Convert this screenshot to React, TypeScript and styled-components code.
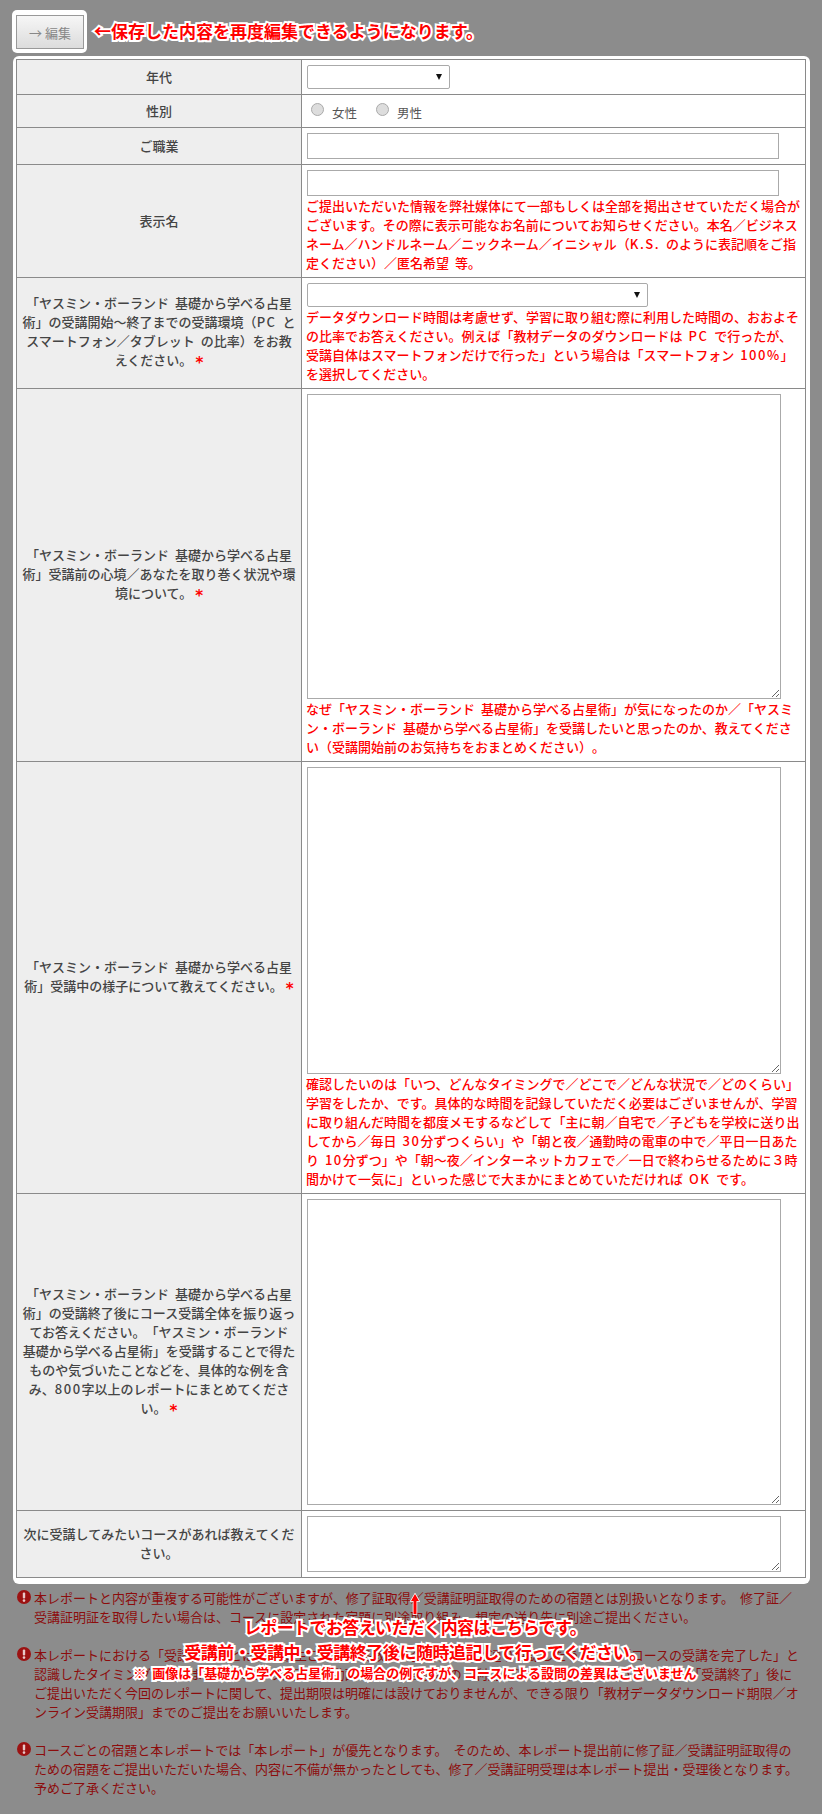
import styled, { createGlobalStyle } from "styled-components";

const GlobalStyle = createGlobalStyle`
  html, body {
    margin: 0;
    padding: 0;
    background: #8c8c8c;
  }
  body {
    font-family: "Noto Sans CJK JP", "Noto Sans", sans-serif;
    font-size: 13px;
    line-height: 19px;
    color: #333;
    word-spacing: 3px;
    text-spacing-trim: space-all;
  }
`;

const Page = styled.div`
  position: relative;
  width: 822px;
  height: 1814px;
  padding: 10px 12px 0 13px;
  box-sizing: border-box;
  overflow: hidden;
`;

const Header = styled.div`
  display: flex;
  align-items: center;
  margin-left: -1px;
  height: 43px;
  margin-bottom: 3px;
`;

const ButtonFrame = styled.div`
  background: #fff;
  border-radius: 5px;
  padding: 5px 3px 4px 4px;
  height: 34px;
`;

const EditButton = styled.button`
  width: 68px;
  height: 34px;
  box-sizing: border-box;
  border: 1px solid #999;
  background: linear-gradient(#f6f6f6, #dcdcdc);
  color: #888;
  font-family: inherit;
  font-size: 13px;
  padding: 0;
`;

const Callout = styled.span<{ $size: number; $spacing: number; $gap?: number }>`
  color: #f00;
  font-weight: 700;
  font-size: ${(p) => p.$size}px;
  letter-spacing: ${(p) => p.$spacing}px;
  line-height: 1.2;
  margin-top: ${(p) => p.$gap ?? 0}px;
  white-space: nowrap;
  -webkit-text-stroke: 4px #fff;
  paint-order: stroke fill;
`;

const TopCallout = styled(Callout)`
  margin-left: 7px;
`;

const Card = styled.div`
  background: #fff;
  border-radius: 6px;
  padding: 3px 4px 6px 3px;
`;

const FormTable = styled.table`
  width: 100%;
  border-collapse: collapse;
  table-layout: fixed;
`;

const LabelColumn = styled.col`
  width: 285px;
`;

const LabelCell = styled.th`
  box-sizing: border-box;
  padding: 4px 5px 6px;
  border: 1px solid #8a8a8a;
  background: #eee;
  color: #444;
  font-size: 13px;
  font-weight: 500;
  text-align: center;
  vertical-align: middle;
`;

const FieldCell = styled.td`
  padding: 5px;
  border: 1px solid #8a8a8a;
  vertical-align: top;
`;

const Required = styled.span`
  color: #f00;
  margin-left: 3px;
  font-family: "DejaVu Sans", sans-serif;
  font-weight: 700;
  font-size: 15px;
  vertical-align: -3px;
  line-height: 1;
`;

const Latin = styled.span`
  letter-spacing: 1.5px;
`;

const SelectBox = styled.div<{ $width: number }>`
  position: relative;
  width: ${(p) => p.$width}px;
  height: 24px;
  box-sizing: border-box;
  border: 1px solid #aaa;
  border-radius: 2px;
  background: #fff;

  &::after {
    content: "";
    position: absolute;
    right: 7px;
    top: 8px;
    border-left: 3px solid transparent;
    border-right: 3px solid transparent;
    border-top: 6px solid #111;
  }
`;

const TextInput = styled.input`
  display: block;
  width: 472px;
  height: 26px;
  box-sizing: border-box;
  border: 1px solid #aaa;
  padding: 0;
  margin: 0;
  background: #fff;
`;

const TextBlock = styled.textarea<{ $height: number }>`
  display: block;
  width: 474px;
  height: ${(p) => p.$height}px;
  box-sizing: border-box;
  border: 1px solid #aaa;
  padding: 0;
  margin: 0;
  background: #fff;
`;

const Hint = styled.div`
  color: #f00;
  font-size: 13px;
  font-weight: 500;
  margin-left: -1px;
`;

const RadioGroup = styled.div`
  display: flex;
  align-items: center;
  padding-left: 4px;
  height: 22px;
`;

const RadioDot = styled.input`
  appearance: none;
  width: 13px;
  height: 13px;
  margin: 0 8px 3px 0;
  box-sizing: border-box;
  border: 1px solid #aaa;
  border-radius: 50%;
  background: #ddd;
`;

const RadioText = styled.label`
  font-size: 12.5px;
  color: #555;
  margin: 2px 19px 0 0;
`;

const Notes = styled.div`
  padding: 4px 0 0 4px;
  color: #8c0c0c;
  font-size: 13px;
`;

const Note = styled.div`
  display: flex;
  gap: 3px;
  width: 785px;
  margin-bottom: 19px;
`;

const NoteIcon = styled.svg`
  flex: none;
  width: 14px;
  height: 14px;
  margin-top: 2px;
`;

const NoteText = styled.div`
  flex: 1;
`;

const OverlayNote = styled.div`
  position: absolute;
  left: 0;
  right: 0;
  top: 1593px;
  padding-left: 8px;
  display: flex;
  flex-direction: column;
  align-items: center;
`;

const UpArrow = styled.svg`
  width: 10px;
  height: 22px;
  margin-bottom: 2px;
`;

const WarnIcon = () => (
  <NoteIcon viewBox="0 0 14 14">
    <circle cx="7" cy="7" r="7" fill="#9c1212" />
    <rect x="5.8" y="2.5" width="2.4" height="6" rx="1" fill="#e8c8c8" />
    <circle cx="7" cy="10.6" r="1.3" fill="#e8c8c8" />
  </NoteIcon>
);

export default function App() {
  return (
    <Page>
      <GlobalStyle />
      <Header>
        <ButtonFrame>
          <EditButton type="button">→ 編集</EditButton>
        </ButtonFrame>
        <TopCallout $size={17} $spacing={0}>
          ←保存した内容を再度編集できるようになります。
        </TopCallout>
      </Header>

      <Card>
        <FormTable>
          <colgroup>
            <LabelColumn />
            <col />
          </colgroup>
          <tbody>
            <tr>
              <LabelCell>年代</LabelCell>
              <FieldCell>
                <SelectBox $width={143} />
              </FieldCell>
            </tr>
            <tr>
              <LabelCell>性別</LabelCell>
              <FieldCell>
                <RadioGroup>
                  <RadioDot type="radio" disabled />
                  <RadioText>女性</RadioText>
                  <RadioDot type="radio" disabled />
                  <RadioText>男性</RadioText>
                </RadioGroup>
              </FieldCell>
            </tr>
            <tr>
              <LabelCell>ご職業</LabelCell>
              <FieldCell>
                <TextInput />
              </FieldCell>
            </tr>
            <tr>
              <LabelCell>表示名</LabelCell>
              <FieldCell>
                <TextInput />
                <Hint>
                  ご提出いただいた情報を弊社媒体にて一部もしくは全部を掲出させていただく場合がございます。その際に表示可能なお名前についてお知らせください。本名／ビジネスネーム／ハンドルネーム／ニックネーム／イニシャル（<Latin>K.S.</Latin> のように表記順をご指定ください）／匿名希望 等。
                </Hint>
              </FieldCell>
            </tr>
            <tr>
              <LabelCell>
                「ヤスミン・ボーランド 基礎から学べる占星術」の受講開始～終了までの受講環境（<Latin>PC</Latin> とスマートフォン／タブレット の比率）をお教えください。
                <Required>*</Required>
              </LabelCell>
              <FieldCell>
                <SelectBox $width={341} />
                <Hint>
                  データダウンロード時間は考慮せず、学習に取り組む際に利用した時間の、おおよその比率でお答えください。例えば「教材データのダウンロードは <Latin>PC</Latin> で行ったが、受講自体はスマートフォンだけで行った」という場合は「スマートフォン <Latin>100%</Latin>」を選択してください。
                </Hint>
              </FieldCell>
            </tr>
            <tr>
              <LabelCell>
                「ヤスミン・ボーランド 基礎から学べる占星術」受講前の心境／あなたを取り巻く状況や環境について。
                <Required>*</Required>
              </LabelCell>
              <FieldCell>
                <TextBlock $height={305} />
                <Hint>
                  なぜ「ヤスミン・ボーランド 基礎から学べる占星術」が気になったのか／「ヤスミン・ボーランド 基礎から学べる占星術」を受講したいと思ったのか、教えてください（受講開始前のお気持ちをおまとめください）。
                </Hint>
              </FieldCell>
            </tr>
            <tr>
              <LabelCell>
                「ヤスミン・ボーランド 基礎から学べる占星術」受講中の様子について教えてください。
                <Required>*</Required>
              </LabelCell>
              <FieldCell>
                <TextBlock $height={307} />
                <Hint>
                  確認したいのは「いつ、どんなタイミングで／どこで／どんな状況で／どのくらい」学習をしたか、です。具体的な時間を記録していただく必要はございませんが、学習に取り組んだ時間を都度メモするなどして「主に朝／自宅で／子どもを学校に送り出してから／毎日 <Latin>30</Latin>分ずつくらい」や「朝と夜／通勤時の電車の中で／平日一日あたり <Latin>10</Latin>分ずつ」や「朝～夜／インターネットカフェで／一日で終わらせるために３時間かけて一気に」といった感じで大まかにまとめていただければ <Latin>OK</Latin> です。
                </Hint>
              </FieldCell>
            </tr>
            <tr>
              <LabelCell>
                「ヤスミン・ボーランド 基礎から学べる占星術」の受講終了後にコース受講全体を振り返ってお答えください。「ヤスミン・ボーランド 基礎から学べる占星術」を受講することで得たものや気づいたことなどを、具体的な例を含み、<Latin>800</Latin>字以上のレポートにまとめてください。
                <Required>*</Required>
              </LabelCell>
              <FieldCell>
                <TextBlock $height={306} />
              </FieldCell>
            </tr>
            <tr>
              <LabelCell>次に受講してみたいコースがあれば教えてください。</LabelCell>
              <FieldCell>
                <TextBlock $height={56} />
              </FieldCell>
            </tr>
          </tbody>
        </FormTable>
      </Card>

      <Notes>
        <Note>
          <WarnIcon />
          <NoteText>
            本レポートと内容が重複する可能性がございますが、修了証取得／受講証明証取得のための宿題とは別扱いとなります。 修了証／受講証明証を取得したい場合は、コースに設定された宿題に別途取り組み、規定の送り先に別途ご提出ください。
          </NoteText>
        </Note>
        <Note>
          <WarnIcon />
          <NoteText>
            本レポートにおける「受講終了」とは、受講生ご自身が各教材の全内容をひと通り確認したうえで、「コースの受講を完了した」と認識したタイミングを指します。このため、実際の動画の視聴や各教材のご利用状況などは、特に問いません。 「受講終了」後にご提出いただく今回のレポートに関して、提出期限は明確には設けておりませんが、できる限り「教材データダウンロード期限／オンライン受講期限」までのご提出をお願いいたします。
          </NoteText>
        </Note>
        <Note>
          <WarnIcon />
          <NoteText>
            コースごとの宿題と本レポートでは「本レポート」が優先となります。 そのため、本レポート提出前に修了証／受講証明証取得のための宿題をご提出いただいた場合、内容に不備が無かったとしても、修了／受講証明受理は本レポート提出・受理後となります。予めご了承ください。
          </NoteText>
        </Note>
      </Notes>

      <OverlayNote>
        <UpArrow viewBox="0 0 10 22">
          <path d="M5 1 L1 8 H3.5 V21 H6.5 V8 H9 Z" fill="#f00" stroke="#fff" strokeWidth="1.5" paintOrder="stroke" />
        </UpArrow>
        <Callout $size={17} $spacing={-0.6}>
          レポートでお答えいただく内容はこちらです。
        </Callout>
        <Callout $size={17} $spacing={-0.45} $gap={4.6}>
          受講前・受講中・受講終了後に随時追記して行ってください。
        </Callout>
        <Callout $size={13} $spacing={0} $gap={3}>
          ※ 画像は「基礎から学べる占星術」の場合の例ですが、コースによる設問の差異はございません
        </Callout>
      </OverlayNote>
    </Page>
  );
}
